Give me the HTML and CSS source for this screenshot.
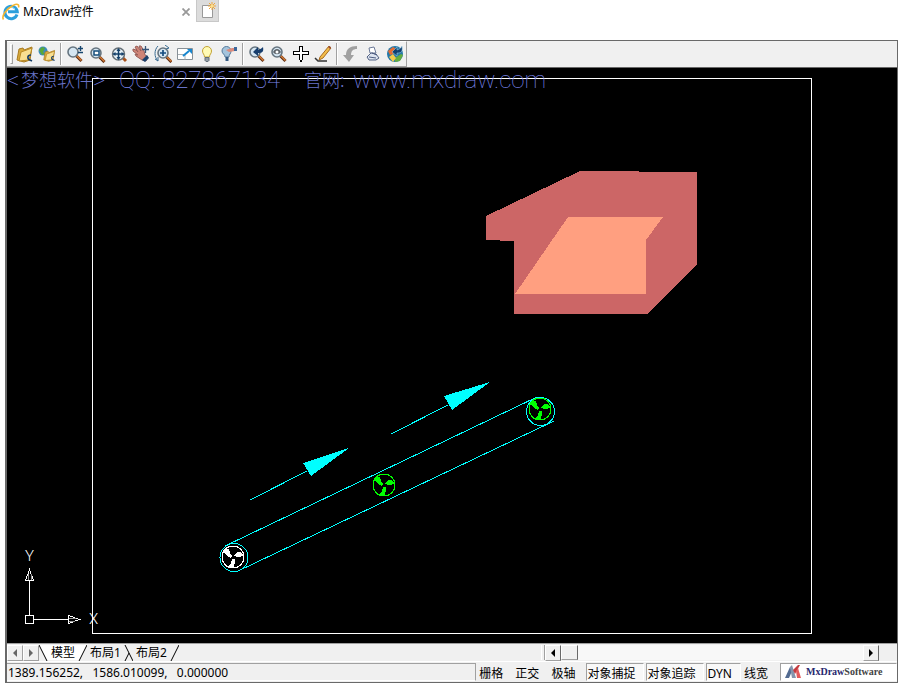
FILE: index.html
```html
<!DOCTYPE html>
<html lang="zh-CN">
<head>
    <meta charset="UTF-8">
    <meta name="viewport" content="width=device-width, initial-scale=1.0">
    <title>MxDraw控件</title>
    <link rel="stylesheet" href="styles.css">
</head>
<body>

<header class="browser-tabs">
    <div class="browser-tab">
        <svg class="ie-icon" viewBox="0 0 18 18" aria-hidden="true">
            <path d="M15 11.500A6.200 6.200 0 1 1 15.300 8.800H6" fill="none" stroke="#2c9fdc" stroke-width="3"/>
            <path d="M4.500 8A5 5 0 0 1 13 6" fill="none" stroke="#8fdcfa" stroke-width="1"/>
            <path d="M1.500 16.500C-1 13 5 5.500 11 2.500C15 .500 17.500 1 16.500 4.500" fill="none" stroke="#f4b631" stroke-width="1.600"/>
        </svg>
        <span class="browser-tab-title">MxDraw控件</span>
        <button class="tab-close" aria-label="关闭">
            <svg viewBox="0 0 8 8"><path d="M.500 .500l7 7M7.500 .500l-7 7" stroke="#999" stroke-width="1.800"/></svg>
        </button>
    </div>
    <button class="new-tab" aria-label="新建选项卡">
        <svg viewBox="0 0 16 18">
            <path d="M2.500 3.500h10v12h-10z" fill="#fff" stroke="#999"/>
            <path d="M12 0v8M8 4h8M9 1l6 6M15 1l-6 6" stroke="#efa63a"/>
            <circle cx="12" cy="4" r="1.500" fill="#ffe28a"/>
        </svg>
    </button>
</header>

<!-- símbolos compartilhados pelos botões de zoom -->
<svg class="symbols" aria-hidden="true">
    <symbol id="lens" viewBox="0 0 18 18">
        <path d="M10.500 11l5 5" stroke="#5b2b10" stroke-width="3"/>
        <path d="M10.500 10.500l5 5" stroke="#d47a35" stroke-width="1.500"/>
        <circle cx="7" cy="7" r="5" fill="#d5e6f2" stroke="#65747f" stroke-width="1.600"/>
    </symbol>
    <symbol id="folder" viewBox="0 0 18 18">
        <path d="M1 15l2-11 4-1 1 2 8-3-2 13-6 2z" fill="#d8aa3c" stroke="#a87a20"/>
        <path d="M5 7l11-4-3 12-10 1z" fill="#f8df91" stroke="#b98a25"/>
        <path d="M15 10c-4 0-4 4-1 5M12 14l4 2" fill="none" stroke="#153d67" stroke-width="1.600"/>
    </symbol>
    <symbol id="fan" viewBox="-12 -12 24 24" overflow="visible">
        <circle r="11" fill="none" stroke="currentColor"/>
        <path fill="currentColor" d="M-7-8h3l1 4 2 3-1 2-4-2-3-4zM1-1l3-4h4l3 4-6 1zM-1 2h3v4l-2 5-4-1v-2l2-2z"/>
    </symbol>
</svg>

<main class="mx-control">
    <div class="toolbar" role="toolbar">
        <div class="toolbar-strip">
            <span class="grip"></span>
            <button class="tool" aria-label="打开"><svg viewBox="0 0 18 18"><use href="#folder"/></svg></button>
            <button class="tool" aria-label="打开网络文件"><svg viewBox="0 0 18 18">
                <circle cx="5" cy="6" r="4.500" fill="#3b8abc"/><path d="M1 5l3-3 3 1-2 4 2 2-3 1z" fill="#57a83b"/>
                <use href="#folder" x="5" y="4" width="13" height="13"/>
            </svg></button>
            <span class="separator"></span>
            <button class="tool" aria-label="缩放"><svg viewBox="0 0 18 18"><use href="#lens"/><path d="M12 3.500h5M14.500 1v5M12 7.500h5" stroke="#17466e" stroke-width="1.400"/></svg></button>
            <button class="tool" aria-label="窗口缩放"><svg viewBox="0 0 18 18"><use href="#lens" x="1" y="1"/><path d="M6 6h5v4H6z" fill="#fff" stroke="#154d7c" stroke-width="1.500"/></svg></button>
            <button class="tool" aria-label="范围缩放"><svg viewBox="0 0 18 18"><path d="M12 12l4 4" stroke="#a9511b" stroke-width="3"/><circle cx="8.500" cy="9" r="6" fill="#e4eff5" stroke="#656f76" stroke-width="1.500"/><path d="M8.500 4v10M3.500 9h10" stroke="#123f69" stroke-width="1.500"/><path d="M6.500 6l2-3 2 3zM6.500 12l2 3 2-3zM5.500 7l-3 2 3 2zM11.500 7l3 2-3 2z" fill="#123f69"/></svg></button>
            <button class="tool" aria-label="平移"><svg viewBox="0 0 18 18"><path d="M1 4l3 1 2 2-3-5 2-1 4 5-2-5h2l3 5 1 4 3 2-2 4-4-1-6-4-1-2 3 1-5-4z" fill="#cf8477" stroke="#985e58"/><path d="M10 15l5-5 2 3-4 4z" fill="#1b416c"/><path d="M13.500 1v7M10 4.500h7" stroke="#365477" stroke-width="1.300"/></svg></button>
            <button class="tool" aria-label="动态缩放"><svg viewBox="0 0 18 18"><use href="#lens" x="2" y="1"/><path d="M9 5v6M6 8h6" stroke="#164d80" stroke-width="1.700"/><path d="M4 1C0 5 0 12 4 16M1 14l3 2V12M11 0l4 3-3 1" fill="none" stroke="#386b91"/></svg></button>
            <button class="tool" aria-label="全屏"><svg viewBox="0 0 18 18"><path d="M1.500 3.500h15v11h-15z" fill="#fff" stroke="#879097"/><path d="M2 9.500h7v5" fill="none" stroke="#a9b0b5"/><path d="M7 11l6-5" stroke="#1686cf" stroke-width="2"/><path d="M11 4h5v5z" fill="#1686cf"/></svg></button>
            <button class="tool" aria-label="打开图层"><svg viewBox="0 0 18 18"><path d="M6.500 12c0-3-2-3-2-6a4.500 4.500 0 0 1 9 0c0 3-2 3-2 6z" fill="#fffbb5" stroke="#c3a335"/><path d="M7 12.500h4v3l-1 1H8l-1-1z" fill="#929da5" stroke="#626d77"/></svg></button>
            <button class="tool" aria-label="关闭图层"><svg viewBox="0 0 18 18"><path d="M5 12c0-3-3-3-3-6a4 4 0 0 1 9 0c0 3-2 3-2 6z" fill="#a5c4dc" stroke="#54799b"/><path d="M5.500 12h3v4h-3z" fill="#355b82"/><path d="M6 5l6-2h3v3l-6 1z" fill="#dc8b7c"/><path d="M14 2h3v4h-3z" fill="#3c689b"/></svg></button>
            <span class="separator"></span>
            <button class="tool" aria-label="上一视图"><svg viewBox="0 0 18 18"><use href="#lens"/><path d="M5 7l5-5v3c3-1 4-2 5-3 1 5-1 6-5 6v3z" fill="#163d6d"/></svg></button>
            <button class="tool" aria-label="实时缩放"><svg viewBox="0 0 18 18"><use href="#lens"/><path d="M3 7c2-4 6-4 8 0-2 3-6 3-8 0z" fill="#5d6369"/><circle cx="7" cy="7" r="1.500" fill="#fff"/></svg></button>
            <button class="tool" aria-label="移动"><svg viewBox="0 0 18 18" shape-rendering="crispEdges"><path d="M7.500 1.500h3v5h6v3h-6v5l-1.500 2-1.500-2v-5h-6v-3h6z" fill="#fff" stroke="#000"/></svg></button>
            <button class="tool" aria-label="绘制"><svg viewBox="0 0 18 18"><path d="M6 12L15 1l2 2L9 13l-4 2z" fill="#f3bd4b" stroke="#a66a20"/><path d="M14 2l2-1 1 2-1 1z" fill="#9b4d33"/><path d="M1 13l3 3h9" fill="none" stroke="#333" stroke-width="1.500"/></svg></button>
            <span class="separator"></span>
            <button class="tool" aria-label="撤销"><svg viewBox="0 0 18 18"><path d="M1 10h3c0-6 4-9 11-9v3c-4 0-6 2-6 6h3l-5 7z" fill="#a0a0a0"/></svg></button>
            <button class="tool" aria-label="打印"><svg viewBox="0 0 18 18"><path d="M5 3l5-1 2 6H6z" fill="#fff" stroke="#6c7a98"/><path d="M3 12l4-4 5 1 3 4-3 2H5z" fill="#dce3ef" stroke="#536284"/><path d="M5 12l7 1M8 8l5 2" stroke="#4e5e82"/></svg></button>
            <button class="tool" aria-label="网站"><svg viewBox="0 0 18 18"><circle cx="9" cy="9" r="8" fill="#2478a8"/><path d="M2 6l5-4 3 2-3 5-3 1z" fill="#e66b31"/><path d="M9 13l6-4 2 1-3 6-5 1z" fill="#65ad3e"/><path d="M3 12l4-3 3 4-3 4z" fill="#f3ca49"/><path d="M6 7l5-5v3c3-1 4-2 5-4 1 6-1 7-5 7v3z" fill="#103f70" stroke="#a9d6ed" stroke-width=".500"/></svg></button>
        </div>
    </div>

    <section class="drawing" aria-label="绘图区">
        <svg class="drawing-svg" viewBox="7 68 890 575" preserveAspectRatio="xMinYMin meet" shape-rendering="crispEdges">
            <path class="frame" d="M92.500 78.500h719v555h-719z"/>

            <g class="watermark">
                <text x="7" y="88">&lt;</text>
                <text class="watermark-cjk" x="21" y="87">梦想软件</text>
                <text x="93" y="88">&gt;</text>
                <text x="119" y="88">QQ:</text>
                <text x="162" y="88">827867134</text>
                <text class="watermark-cjk" x="304" y="87">官网:</text>
                <text x="353" y="88">www.mxdraw.com</text>
            </g>

            <path fill="#cc6666" d="M486 216l94-45 117 1v92l-50 50H514v-73l-28-1z"/>
            <path fill="#ff9f80" d="M568 217h95l-17 23v54H515z"/>

            <g class="belt">
                <path d="M225 546L537 397M236 572L554 421"/>
                <circle cx="234" cy="557.500" r="14"/>
                <circle cx="540.500" cy="411.500" r="14"/>
                <path d="M250 500l57-29M391 434l57-29"/>
                <path class="arrow-head" d="M303 463l46-15-38 28zM444 396l46-14-38 28z"/>
            </g>

            <use class="fan-white" href="#fan" x="221" y="545" width="24" height="24"/>
            <use class="fan-green" href="#fan" x="372" y="473" width="24" height="24"/>
            <use class="fan-green" href="#fan" x="528" y="397" width="24" height="24"/>

            <g class="axes">
                <path d="M25.500 615.500h8v8h-8zM29.500 615V581M34 619.500h34"/>
                <path d="M25.500 580.500h8l-4-11zM68.500 615.500v8l11-4z"/>
                <path class="axes-shade" d="M28.500 574v6M31.500 574v6M69 618.500h7M69 621.500h6"/>
                <text x="25" y="561">Y</text>
                <text x="89" y="624">X</text>
            </g>
        </svg>
    </section>

    <div class="layout-bar">
        <nav class="layout-tabs">
            <button class="scroll-btn" aria-label="上一个"><svg viewBox="0 0 8 8"><path d="M6 0v8L2 4z" fill="#666"/></svg></button>
            <button class="scroll-btn" aria-label="下一个"><svg viewBox="0 0 8 8"><path d="M2 0v8l4-4z" fill="#666"/></svg></button>
            <svg class="slant" viewBox="0 0 9 16"><path d="M0 0h9v16z" fill="#fff"/><path d="M0 0l8 16" stroke="#000"/></svg>
            <button class="layout-tab active">模型</button>
            <svg class="slant" viewBox="0 0 9 16"><path d="M0 0h9L1 16H0z" fill="#fff"/><path d="M9 0L1 16" stroke="#000"/></svg>
            <button class="layout-tab">布局1</button>
            <svg class="slant" viewBox="0 0 9 16"><path d="M1 0l8 16M5 8L1 16" fill="none" stroke="#000"/></svg>
            <button class="layout-tab">布局2</button>
            <svg class="slant" viewBox="0 0 9 16"><path d="M9 0L1 16" stroke="#000"/></svg>
        </nav>
        <div class="hscroll">
            <span class="splitter"></span>
            <button class="scroll-btn" aria-label="向左滚动"><svg viewBox="0 0 8 8"><path d="M6 0v8L2 4z" fill="#000"/></svg></button>
            <span class="thumb"></span>
            <span class="track"></span>
            <button class="scroll-btn" aria-label="向右滚动"><svg viewBox="0 0 8 8"><path d="M2 0v8l4-4z" fill="#000"/></svg></button>
        </div>
    </div>

    <footer class="status-bar">
        <output class="coords">1389.156252,&nbsp;&nbsp; 1586.010099,&nbsp;&nbsp; 0.000000</output>
        <button class="toggle">栅格</button>
        <button class="toggle">正交</button>
        <button class="toggle">极轴</button>
        <button class="toggle on">对象捕捉</button>
        <button class="toggle on">对象追踪</button>
        <button class="toggle on">DYN</button>
        <button class="toggle">线宽</button>
        <a class="brand" href="#">
            <svg viewBox="0 0 16 16" aria-hidden="true">
                <path d="M0 14L5 3l2 4-3 7z" fill="#536b91"/>
                <path d="M5 3l2-2 4 13H7z" fill="#8494ac"/>
                <path d="M8 6l5-5h2l-5 9z" fill="#c43b40"/>
                <path d="M11 7l2-3 3 10h-4z" fill="#e35a5b"/>
            </svg>
            <span><span class="brand-mx">MxDraw</span>Software</span>
        </a>
    </footer>
</main>

</body>
</html>
```
FILE: styles.css
```css
* {
    box-sizing: border-box;
}
body {
    font-family: "Noto Sans", "Noto Sans CJK SC", sans-serif;
    font-size: 12px;
    line-height: 16px;
    margin: 0;
    height: 100vh;
    display: flex;
    flex-direction: column;
    background: #fff;
    color: #000;
}
button {
    font: inherit;
    color: inherit;
    background: none;
    border: none;
    padding: 0;
    margin: 0;
    white-space: nowrap;
}
svg {
    display: block;
}
.symbols {
    display: none;
}

/* browser tabs */
.browser-tabs {
    display: flex;
    height: 22px;
    flex: none;
}
.browser-tab {
    display: flex;
    align-items: center;
    width: 196px;
    padding: 2px 6px 0 2px;
}
.ie-icon {
    width: 18px;
    height: 18px;
}
.browser-tab-title {
    flex: 1;
    padding-left: 3px;
}
.tab-close svg {
    width: 8px;
    height: 8px;
}
.new-tab {
    width: 23px;
    background: #dcdcdc;
    border: 1px solid #c8c8c8;
    border-top: none;
    padding-left: 3px;
}
.new-tab svg {
    width: 16px;
    height: 18px;
}

/* control */
.mx-control {
    flex: 1;
    min-height: 0;
    display: flex;
    flex-direction: column;
    margin: 18px 17px 14px 5px;
    border: 1px solid #696969;
    border-left-width: 2px;
    background: #f0f0f0;
}
.toolbar {
    flex: none;
    height: 27px;
    border-bottom: 1px solid #696969;
    display: flex;
}
.toolbar-strip {
    display: flex;
    align-items: center;
    border-top: 1px solid #fff;
    border-right: 1px solid #a0a0a0;
    border-bottom: 1px solid #a0a0a0;
}
.grip {
    width: 3px;
    height: 20px;
    margin: 0 1px 0 3px;
    border: 1px solid #fff;
    border-right-color: #a0a0a0;
    border-bottom-color: #a0a0a0;
}
.tool {
    width: 22px;
    height: 22px;
    padding: 2px;
}
.tool svg {
    width: 18px;
    height: 18px;
}
.separator {
    width: 2px;
    height: 22px;
    margin: 0 2px;
    border-left: 1px solid #a0a0a0;
    border-right: 1px solid #fff;
}

/* drawing */
.drawing {
    flex: 1;
    min-height: 0;
    background: #000;
}
.drawing-svg {
    width: 100%;
    height: 100%;
    overflow: visible;
}
.frame {
    fill: none;
    stroke: #fff;
}
.watermark {
    fill: #7d88ee;
    font-family: Roboto, sans-serif;
    font-size: 24px;
    font-weight: 100;
}
.watermark-cjk {
    fill: #6973c8;
    font-family: "Noto Sans CJK SC", sans-serif;
    font-size: 18px;
    font-weight: 300;
}
.belt {
    fill: none;
    stroke: #0ff;
}
.belt .arrow-head {
    fill: #0ff;
    stroke: none;
}
.fan-white {
    color: #fff;
}
.fan-green {
    color: #0f0;
}
.axes {
    fill: none;
    stroke: #fff;
}
.axes-shade {
    stroke: #999;
}
.axes text {
    fill: #fff;
    stroke: none;
    font-family: Roboto, sans-serif;
    font-size: 15px;
    font-weight: 300;
}

/* layout tabs and scroll bar */
.layout-bar {
    flex: none;
    display: flex;
    height: 19px;
    border-top: 1px solid #a0a0a0;
    border-bottom: 1px solid #fff;
    padding: 1px 0;
}
.layout-tabs {
    flex: 0 0 60%;
    display: flex;
}
.scroll-btn {
    width: 16px;
    height: 16px;
    padding: 0 3px;
    border: 1px solid #fff;
    border-right-color: #a0a0a0;
    border-bottom-color: #a0a0a0;
}
.scroll-btn svg {
    width: 8px;
    height: 8px;
}
.slant {
    width: 9px;
    height: 16px;
}
.layout-tab {
    padding: 0 3px;
    line-height: 14px;
}
.layout-tab.active {
    background: #fff;
}
.hscroll {
    flex: 1;
    display: flex;
    padding-right: 18px;
}
.splitter {
    width: 4px;
    border-left: 1px solid #fff;
    border-right: 1px solid #a0a0a0;
}
.thumb {
    width: 17px;
    border: 1px solid #fff;
    border-right: 1px solid #696969;
    border-bottom-color: #a0a0a0;
}
.track {
    flex: 1;
    background: #f8f8f8;
}
.hscroll .scroll-btn {
    background: #f0f0f0;
    border-right-color: #696969;
}

/* status bar */
.status-bar {
    flex: none;
    display: flex;
    height: 20px;
    gap: 2px;
    padding: 1px 0;
    line-height: 18px;
}
.coords {
    flex: 1;
    padding-left: 1px;
    border: 1px solid #a0a0a0;
    border-left: none;
    border-bottom-color: #fff;
    white-space: nowrap;
}
.toggle {
    min-width: 34px;
    padding: 1px 8px 0 0;
    border: 1px solid transparent;
}
.toggle.on {
    background: #f8f8f8;
    border-color: #a0a0a0 #fff #fff #a0a0a0;
}
.brand {
    display: flex;
    align-items: center;
    gap: 5px;
    margin-left: 1px;
    width: 117px;
    padding-left: 4px;
    border: 1px solid #a0a0a0;
    border-right-color: #fff;
    border-bottom-color: #fff;
    background: #fff;
    color: #444;
    font-family: "Liberation Serif", serif;
    font-size: 10px;
    font-weight: bold;
    text-decoration: none;
}
.brand svg {
    width: 16px;
    height: 16px;
}
.brand-mx {
    color: #28286e;
}
```
